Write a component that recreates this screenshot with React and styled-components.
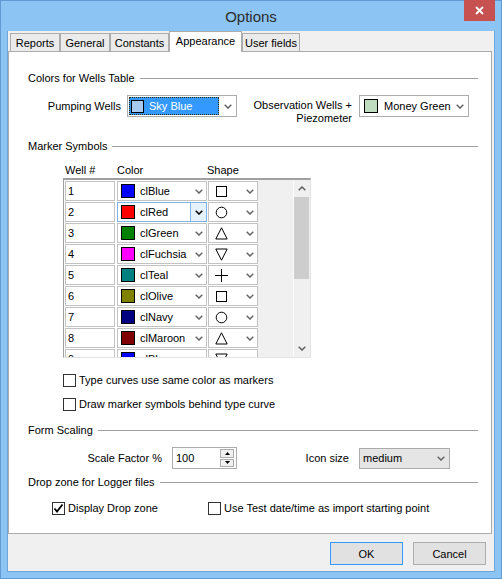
import React from 'react'
import styled, { createGlobalStyle } from 'styled-components'

const GlobalStyle = createGlobalStyle`
  html, body { margin: 0; padding: 0; background: #fff; }
  body {
    font-family: "Liberation Sans", Arial, sans-serif;
    font-size: 11px;
    color: #000;
  }
  * { box-sizing: border-box; }
`

const wells = [
  { n: 1, color: '#0000ff', name: 'clBlue', shape: 'square' },
  { n: 2, color: '#ff0000', name: 'clRed', shape: 'circle', active: true },
  { n: 3, color: '#008000', name: 'clGreen', shape: 'up' },
  { n: 4, color: '#ff00ff', name: 'clFuchsia', shape: 'down' },
  { n: 5, color: '#008080', name: 'clTeal', shape: 'plus' },
  { n: 6, color: '#808000', name: 'clOlive', shape: 'square' },
  { n: 7, color: '#000080', name: 'clNavy', shape: 'circle' },
  { n: 8, color: '#800000', name: 'clMaroon', shape: 'up' },
  { n: 9, color: '#0000ff', name: 'clBlue', shape: 'down' },
]

const tabs = [
  { label: 'Reports', w: 50 },
  { label: 'General', w: 50 },
  { label: 'Constants', w: 59 },
  { label: 'Appearance', w: 73, active: true },
  { label: 'User fields', w: 58 },
]

const Chevron = ({ color = '#666', up }) => (
  <svg width="8" height="5" viewBox="0 0 8 5">
    <polyline
      points={up ? '0.7,4.3 4,1 7.3,4.3' : '0.7,0.7 4,4 7.3,0.7'}
      fill="none"
      stroke={color}
      strokeWidth="1.5"
    />
  </svg>
)

const ShapeIcon = ({ kind }) => (
  <svg width="13" height="13" viewBox="0 0 13 13" fill="none" stroke="#000" strokeWidth="1">
    {kind === 'square' && <rect x="1.5" y="1.5" width="10" height="10" />}
    {kind === 'circle' && <circle cx="6.5" cy="6.5" r="5.3" />}
    {kind === 'up' && <polygon points="6.5,0.8 12.2,12 0.8,12" />}
    {kind === 'down' && <polygon points="0.8,1 12.2,1 6.5,12.2" />}
    {kind === 'plus' && <path d="M6.5 0V13M0 6.5H13" />}
  </svg>
)

const Check = () => (
  <svg width="11" height="11" viewBox="0 0 11 11">
    <polyline points="1.5,5.5 4,8.5 9.5,1.5" fill="none" stroke="#000" strokeWidth="1.8" />
  </svg>
)

const Frame = styled.div`
  width: 502px;
  height: 579px;
  background: #8cc4f4;
  border: 1px solid #5f9ad2;
  padding: 0 6px 6px 6px;
  display: flex;
  flex-direction: column;
`

const TitleBar = styled.div`
  height: 30px;
  display: grid;
  grid-template-columns: 1fr auto 1fr;
  align-items: center;
`

const Title = styled.div`
  grid-column: 2;
  font-size: 15px;
  color: #2b2b2b;
  padding-top: 1px;
`

const CloseButton = styled.div`
  grid-column: 3;
  justify-self: end;
  align-self: start;
  margin-top: -1px;
  width: 31px;
  height: 21px;
  background: #c75050;
  display: flex;
  align-items: center;
  justify-content: center;
`

const Client = styled.div`
  flex: 1;
  background: #f0f0f0;
  border: 1px solid #6ea6dc;
  border-top: none;
  display: flex;
  flex-direction: column;
`

const TabStrip = styled.div`
  height: 20px;
  display: flex;
  align-items: flex-end;
  padding-left: 2px;
`

const Tab = styled.div`
  width: ${p => p.$w}px;
  height: ${p => (p.$active ? 21 : 18)}px;
  margin-bottom: ${p => (p.$active ? -1 : 0)}px;
  position: relative;
  z-index: ${p => (p.$active ? 1 : 0)};
  background: ${p => (p.$active ? '#fff' : '#ebebeb')};
  border: 1px solid #acacac;
  border-bottom: none;
  display: flex;
  align-items: center;
  justify-content: center;
  padding-bottom: ${p => (p.$active ? 3 : 0)}px;
`

const Panel = styled.div`
  width: 484px;
  height: 483px;
  background: #fff;
  border: 1px solid #acacac;
  padding: 19px 13px 0 19px;
  display: flex;
  flex-direction: column;
`

const Heading = styled.div`
  display: flex;
  align-items: center;
  height: 14px;
  line-height: 14px;
  margin-top: ${p => p.$mt || 0}px;
  white-space: nowrap;
  &::after {
    content: '';
    flex: 1;
    height: 1px;
    background: #a0a0a0;
    margin-left: 5px;
  }
`

const FieldRow = styled.div`
  display: flex;
  align-items: ${p => p.$align || 'flex-start'};
  height: ${p => p.$h}px;
  margin-top: ${p => p.$mt}px;
`

const FieldLabel = styled.div`
  width: ${p => p.$w}px;
  text-align: right;
  margin-right: ${p => p.$gap}px;
  line-height: ${p => p.$lh || 22}px;
  margin-top: ${p => p.$mt || 0}px;
`

const Combo = styled.div`
  width: ${p => p.$w}px;
  height: ${p => p.$h || 22}px;
  border: 1px solid #acacac;
  background: ${p => p.$bg || '#fff'};
  display: flex;
  align-items: center;
  padding-left: ${p => p.$pl || 1}px;
`

const ComboValue = styled.div`
  flex: 1;
  display: flex;
  align-items: center;
  height: 18px;
  gap: ${p => p.$gap || 6}px;
  padding-left: 2px;
  background: ${p => (p.$selected ? '#3399ff' : 'transparent')};
  color: ${p => (p.$selected ? '#fff' : '#000')};
  outline: ${p => (p.$selected ? '1px dotted #3a2a10' : 'none')};
  outline-offset: -1px;
`

const ComboArrow = styled.div`
  width: 17px;
  align-self: stretch;
  display: flex;
  align-items: center;
  justify-content: center;
  flex-shrink: 0;
`

const Swatch = styled.div`
  width: ${p => p.$size || 13}px;
  height: ${p => p.$size || 13}px;
  background: ${p => p.$color};
  border: 1px solid #000;
  flex-shrink: 0;
`

const ColumnHeads = styled.div`
  display: flex;
  margin-top: 10px;
  padding-left: 37px;
  line-height: 14px;
`

const ColumnHead = styled.div`
  width: ${p => p.$w}px;
`

const Grid = styled.div`
  margin-left: 35px;
  margin-top: 1px;
  width: 248px;
  height: 180px;
  border-top: 2px solid #a0a0a0;
  border-left: 1px solid #a0a0a0;
  border-right: 1px solid #e3e3e3;
  border-bottom: 1px solid #e3e3e3;
  display: flex;
  overflow: hidden;
`

const Rows = styled.div`
  width: 194px;
  padding: 1px 0 0 1px;
  display: flex;
  flex-direction: column;
  gap: 1px;
  background: #fff;
`

const Row = styled.div`
  display: flex;
  flex-shrink: 0;
`

const Cell = styled.div`
  width: ${p => p.$w}px;
  height: 20px;
  margin-right: ${p => p.$mr || 0}px;
  border: 1px solid ${p => (p.$active ? '#7eb4ea' : '#c3c3c3')};
  background: #fff;
  display: flex;
  align-items: center;
  padding-left: ${p => p.$pl}px;
  line-height: 18px;
`

const CellText = styled.span`
  flex: 1;
  margin-left: ${p => p.$ml || 0}px;
  white-space: nowrap;
  overflow: hidden;
`

const CellDrop = styled.div`
  width: 16px;
  align-self: stretch;
  display: flex;
  align-items: center;
  justify-content: center;
  background: ${p => (p.$active ? '#e5f1fb' : 'transparent')};
  border-left: 1px solid ${p => (p.$active ? '#7eb4ea' : 'transparent')};
`

const Filler = styled.div`
  flex: 1;
  background: #f0f0f0;
`

const Scrollbar = styled.div`
  width: 17px;
  background: #f0f0f0;
  border-left: 1px solid #fafafa;
  display: flex;
  flex-direction: column;
`

const ScrollButton = styled.div`
  height: 17px;
  display: flex;
  align-items: center;
  justify-content: center;
  flex-shrink: 0;
`

const Thumb = styled.div`
  height: 82px;
  background: #cdcdcd;
  margin-right: 1px;
  flex-shrink: 0;
`

const Track = styled.div`
  flex: 1;
`

const CheckRow = styled.div`
  display: flex;
  align-items: center;
  height: 14px;
  margin-top: ${p => p.$mt}px;
  padding-left: ${p => p.$indent}px;
`

const CheckItem = styled.label`
  display: flex;
  align-items: center;
  width: ${p => (p.$w ? `${p.$w}px` : 'auto')};
  line-height: 14px;
  white-space: nowrap;
`

const Box = styled.span`
  width: 13px;
  height: 13px;
  border: 1px solid #333;
  background: #fff;
  margin-right: 3px;
  display: flex;
  align-items: center;
  justify-content: center;
  flex-shrink: 0;
`

const Spin = styled.div`
  width: ${p => p.$w}px;
  height: 22px;
  border: 1px solid #acacac;
  background: #fff;
  display: flex;
  align-items: center;
  padding: 0 2px 0 3px;
`

const SpinValue = styled.div`
  flex: 1;
`

const SpinButtons = styled.div`
  width: 14px;
  align-self: stretch;
  display: flex;
  flex-direction: column;
  gap: 1px;
  padding: 1px 0;
`

const SpinButton = styled.div`
  flex: 1;
  border: 1px solid #acacac;
  background: #f0f0f0;
  display: flex;
  align-items: center;
  justify-content: center;
`

const Footer = styled.div`
  flex: 1;
  display: flex;
  justify-content: flex-end;
  align-items: flex-start;
  gap: 10px;
  padding: 8px 8px 0 0;
`

const Button = styled.div`
  width: 73px;
  height: 23px;
  background: #e1e1e1;
  border: 1px solid ${p => (p.$default ? '#3399ff' : '#adadad')};
  display: flex;
  align-items: center;
  justify-content: center;
`

const Triangle = ({ up }) => (
  <svg width="5" height="3" viewBox="0 0 5 3">
    <polygon points={up ? '2.5,0 5,3 0,3' : '0,0 5,0 2.5,3'} fill="#000" />
  </svg>
)

export default function App() {
  return (
    <>
      <GlobalStyle />
      <Frame>
        <TitleBar>
          <Title>Options</Title>
          <CloseButton>
            <svg width="9" height="9" viewBox="0 0 9 9">
              <path d="M1 1L8 8M8 1L1 8" stroke="#fff" strokeWidth="1.8" />
            </svg>
          </CloseButton>
        </TitleBar>
        <Client>
          <TabStrip>
            {tabs.map(t => (
              <Tab key={t.label} $w={t.w} $active={t.active}>{t.label}</Tab>
            ))}
          </TabStrip>
          <Panel>
            <Heading>Colors for Wells Table</Heading>
            <FieldRow $h={32} $mt={10}>
              <FieldLabel $w={93} $gap={6}>Pumping Wells</FieldLabel>
              <Combo $w={110}>
                <ComboValue $selected $gap={5}>
                  <Swatch $color="#a6caf0" />
                  Sky Blue
                </ComboValue>
                <ComboArrow><Chevron /></ComboArrow>
              </Combo>
              <FieldLabel $w={115} $gap={7} $lh={13} $mt={4}>
                Observation Wells +<br />Piezometer
              </FieldLabel>
              <Combo $w={110} $pl={2}>
                <ComboValue>
                  <Swatch $color="#c0dcc0" $size={14} />
                  Money Green
                </ComboValue>
                <ComboArrow><Chevron /></ComboArrow>
              </Combo>
            </FieldRow>

            <Heading $mt={12}>Marker Symbols</Heading>
            <ColumnHeads>
              <ColumnHead $w={52}>Well #</ColumnHead>
              <ColumnHead $w={90}>Color</ColumnHead>
              <ColumnHead>Shape</ColumnHead>
            </ColumnHeads>
            <Grid>
              <Rows>
                {wells.map(w => (
                  <Row key={w.n}>
                    <Cell $w={50} $mr={2} $pl={2}>{w.n}</Cell>
                    <Cell $w={90} $mr={1} $pl={3} $active={w.active}>
                      <Swatch $color={w.color} $size={14} />
                      <CellText $ml={5}>{w.name}</CellText>
                      <CellDrop $active={w.active}>
                        <Chevron color={w.active ? '#000' : '#666'} />
                      </CellDrop>
                    </Cell>
                    <Cell $w={50} $pl={6}>
                      <ShapeIcon kind={w.shape} />
                      <CellText />
                      <CellDrop><Chevron /></CellDrop>
                    </Cell>
                  </Row>
                ))}
              </Rows>
              <Filler />
              <Scrollbar>
                <ScrollButton><Chevron up color="#606060" /></ScrollButton>
                <Thumb />
                <Track />
                <ScrollButton><Chevron color="#606060" /></ScrollButton>
              </Scrollbar>
            </Grid>

            <CheckRow $mt={15} $indent={35}>
              <CheckItem><Box />Type curves use same color as markers</CheckItem>
            </CheckRow>
            <CheckRow $mt={10} $indent={35}>
              <CheckItem><Box />Draw marker symbols behind type curve</CheckItem>
            </CheckRow>

            <Heading $mt={12}>Form Scaling</Heading>
            <FieldRow $h={22} $mt={10} $align="center">
              <FieldLabel $w={134} $gap={10}>Scale Factor %</FieldLabel>
              <Spin $w={65}>
                <SpinValue>100</SpinValue>
                <SpinButtons>
                  <SpinButton><Triangle up /></SpinButton>
                  <SpinButton><Triangle /></SpinButton>
                </SpinButtons>
              </Spin>
              <FieldLabel $w={112} $gap={10}>Icon size</FieldLabel>
              <Combo $w={91} $h={21} $bg="#e5e5e5" $pl={1}>
                <ComboValue>medium</ComboValue>
                <ComboArrow><Chevron /></ComboArrow>
              </Combo>
            </FieldRow>

            <Heading $mt={6}>Drop zone for Logger files</Heading>
            <CheckRow $mt={12} $indent={24}>
              <CheckItem $w={156}><Box><Check /></Box>Display Drop zone</CheckItem>
              <CheckItem><Box />Use Test date/time as import starting point</CheckItem>
            </CheckRow>
          </Panel>
          <Footer>
            <Button $default>OK</Button>
            <Button>Cancel</Button>
          </Footer>
        </Client>
      </Frame>
    </>
  )
}
